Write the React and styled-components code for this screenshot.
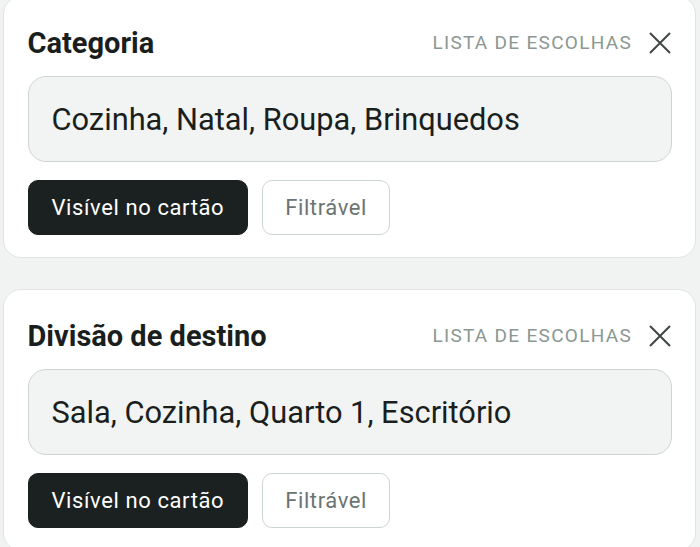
import React from 'react';
import styled, { createGlobalStyle } from 'styled-components';

const GlobalStyle = createGlobalStyle`
  *, *::before, *::after {
    box-sizing: border-box;
  }
  html, body {
    margin: 0;
    padding: 0;
    background: #f1f3f2;
    font-family: Roboto, "Noto Sans", "Liberation Sans", sans-serif;
  }
`;

const Page = styled.div`
  display: flex;
  flex-direction: column;
  gap: 31px;
  padding: 0 4px 0 3px;
  margin-top: -4px;
  height: 551px;
  overflow: hidden;
`;

const Card = styled.section`
  flex-shrink: 0;
  background: #ffffff;
  border: 1.5px solid #dfe4e2;
  border-radius: 18px;
  padding: 27.5px 23px 22.5px 23.5px;
  display: flex;
  flex-direction: column;
`;

const Header = styled.div`
  display: flex;
  align-items: center;
  height: 36px;
`;

const Title = styled.h2`
  flex: 1;
  margin: 0;
  font-size: 29px;
  font-weight: 700;
  color: #1a1f1e;
`;

const Kind = styled.span`
  font-size: 19px;
  letter-spacing: 1.3px;
  color: #8b9792;
  text-transform: uppercase;
`;

const CloseButton = styled.button`
  border: 0;
  background: none;
  padding: 0;
  margin-left: 16px;
  width: 24px;
  height: 24px;
  display: flex;
  align-items: center;
  justify-content: center;
  color: #3f4644;
`;

const Options = styled.div`
  margin-top: 15px;
  height: 86px;
  display: flex;
  align-items: center;
  padding: 2px 23px 0;
  background: #f2f4f3;
  border: 1.5px solid #cdd5d2;
  border-radius: 18px;
  font-size: 30.8px;
  color: #1a1f1e;
  white-space: nowrap;
`;

const Actions = styled.div`
  display: flex;
  gap: 14px;
  margin-top: 18px;
`;

const Chip = styled.button`
  height: 55px;
  padding: 0 ${(p) => (p.$on ? 23 : 22)}px;
  border-radius: 10px;
  font-family: inherit;
  font-size: 22px;
  letter-spacing: 0.6px;
  background: ${(p) => (p.$on ? '#1b2120' : '#ffffff')};
  color: ${(p) => (p.$on ? '#ffffff' : '#6b7470')};
  border: 1.5px solid ${(p) => (p.$on ? '#1b2120' : '#cdd5d2')};
`;

const CloseIcon = () => (
  <svg width="22" height="22" viewBox="0 0 22 22" fill="none" stroke="currentColor" strokeWidth="2">
    <path d="M1 1 L21 21 M21 1 L1 21" />
  </svg>
);

const fields = [
  { name: 'Categoria', values: 'Cozinha, Natal, Roupa, Brinquedos' },
  { name: 'Divisão de destino', values: 'Sala, Cozinha, Quarto 1, Escritório' },
];

export default function App() {
  return (
    <>
      <GlobalStyle />
      <Page>
        {fields.map((f) => (
          <Card key={f.name}>
            <Header>
              <Title>{f.name}</Title>
              <Kind>Lista de escolhas</Kind>
              <CloseButton aria-label="Remover">
                <CloseIcon />
              </CloseButton>
            </Header>
            <Options>{f.values}</Options>
            <Actions>
              <Chip $on>Visível no cartão</Chip>
              <Chip>Filtrável</Chip>
            </Actions>
          </Card>
        ))}
      </Page>
    </>
  );
}
